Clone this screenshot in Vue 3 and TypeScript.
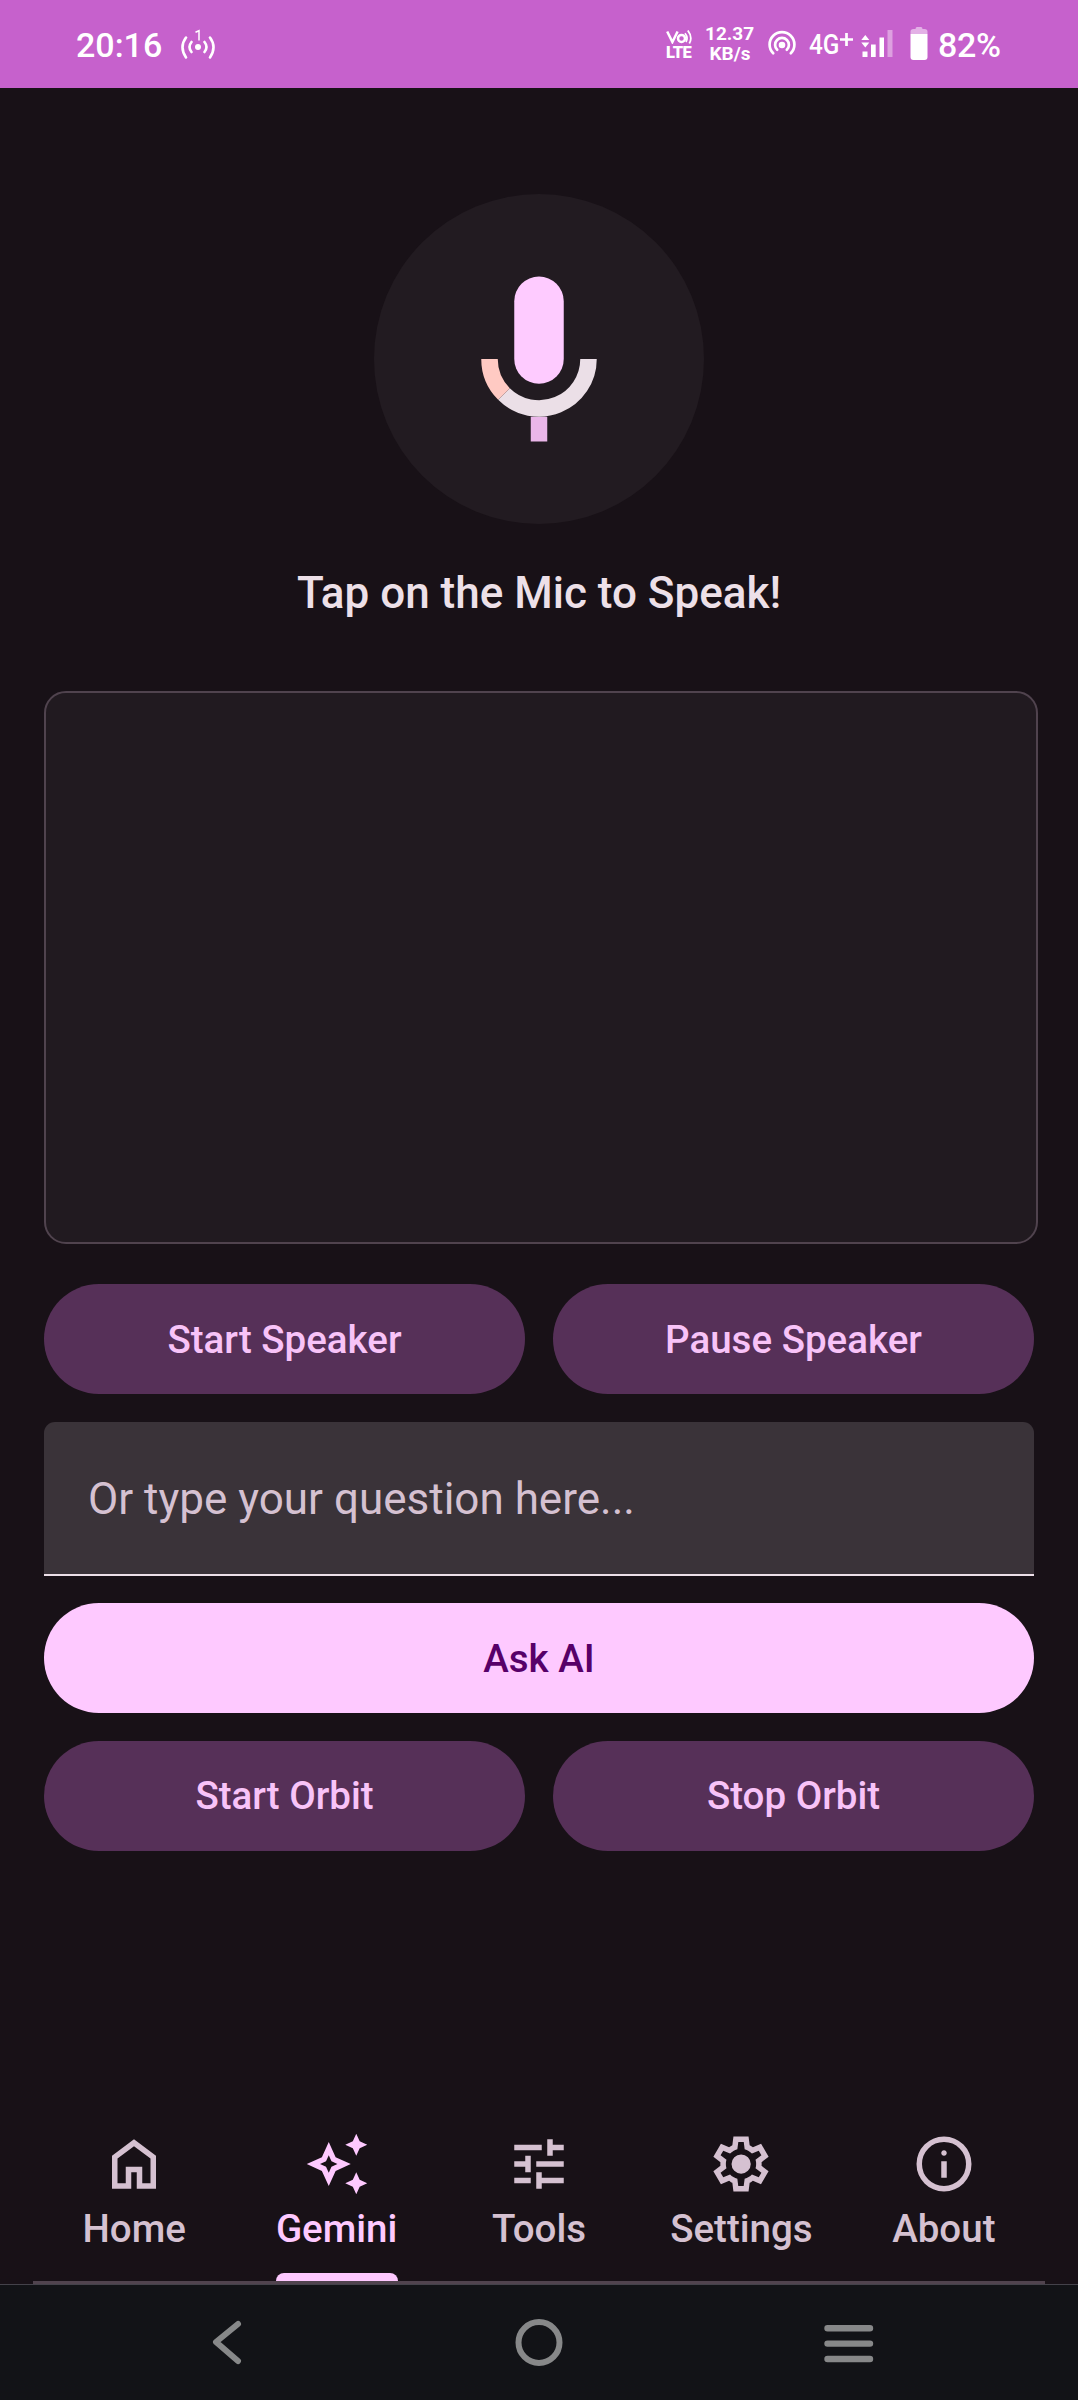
<script setup lang="ts">
import { ref } from 'vue'

interface Tab {
  label: string
  viewBox: string
  path: string
}

const tabs: Tab[] = [
  {
    label: 'Home',
    viewBox: '0 -960 960 960',
    path: 'M240-200h120v-240h240v240h120v-360L480-740 240-560v360Zm-80 80v-480l320-240 320 240v480H520v-240h-80v240H160Z',
  },
  {
    label: 'Gemini',
    viewBox: '0 0 24 24',
    path: 'M19 9l1.25-2.75L23 5l-2.75-1.25L19 1l-1.25 2.75L15 5l2.75 1.25L19 9zm0 6l-1.25 2.75L15 19l2.75 1.25L19 23l1.25-2.75L23 19l-2.75-1.25L19 15zM11.5 9.5L9 4 6.5 9.5 1 12l5.5 2.5L9 20l2.5-5.5L17 12l-5.5-2.5zm-1.51 3.49L9 15.17l-.99-2.18L5.83 12l2.18-.99L9 8.83l.99 2.18 2.17.99-2.17.99z',
  },
  {
    label: 'Tools',
    viewBox: '0 0 24 24',
    path: 'M3 17v2h6v-2H3zM3 5v2h10V5H3zm10 16v-2h8v-2h-8v-2h-2v6h2zM7 9v2H3v2h4v2h2V9H7zm14 4v-2H11v2h10zm-6-4h2V7h4V5h-4V3h-2v6z',
  },
  {
    label: 'Settings',
    viewBox: '0 -960 960 960',
    path: 'm370-80-16-128q-13-5-24.5-12T307-235l-119 50L78-375l103-78q-1-7-1-13.5v-27q0-6.5 1-13.5L78-585l110-190 119 50q11-8 23-15t24-12l16-128h220l16 128q13 5 24.5 12t22.5 15l119-50 110 190-103 78q1 7 1 13.5v27q0 6.5-2 13.5l103 78-110 190-118-50q-11 8-23 15t-24 12L590-80H370Zm70-80h79l14-106q31-8 57.5-23.5T639-327l99 41 39-68-86-65q5-14 7-29.5t2-31.5q0-16-2-31.5t-7-29.5l86-65-39-68-99 42q-22-23-48.5-38.5T533-694l-13-106h-79l-14 106q-31 8-57.5 23.5T321-633l-99-41-39 68 86 64q-5 15-7 30t-2 32q0 16 2 31t7 30l-86 65 39 68 99-42q22 23 48.5 38.5T427-266l13 106Zm42-180q58 0 99-41t41-99q0-58-41-99t-99-41q-59 0-99.5 41T342-480q0 58 40.5 99t99.5 41Z',
  },
  {
    label: 'About',
    viewBox: '0 -960 960 960',
    path: 'M440-280h80v-240h-80v240Zm40-320q17 0 28.5-11.5T520-640q0-17-11.5-28.5T480-680q-17 0-28.5 11.5T440-640q0 17 11.5 28.5T480-600Zm0 520q-83 0-156-31.5T197-197q-54-54-85.5-127T80-480q0-83 31.5-156T197-763q54-54 127-85.5T480-880q83 0 156 31.5T763-763q54 54 85.5 127T880-480q0 83-31.5 156T763-197q-54 54-127 85.5T480-80Zm0-80q134 0 227-93t93-227q0-134-93-227t-227-93q-134 0-227 93t-93 227q0 134 93 227t227 93Z',
  },
]

const active = ref('Gemini')
const question = ref('')
</script>

<template>
  <div class="screen">
    <header class="status">
      <span class="clock">20:16</span>
      <svg class="cast" width="36" height="34" viewBox="0 0 36 34" fill="none" stroke="#fff" stroke-width="2.6" stroke-linecap="round">
        <circle cx="18" cy="19" r="3" fill="#fff" stroke="none" />
        <path d="M11.500 14Q7.500 19 11.500 24M6 9.500Q-1 19 6 29.500M24.500 14Q28.500 19 24.500 24M30 9.500Q37 19 30 29.500" />
        <path d="M15.500 4.200L19 2.700V12.500" stroke-width="1.500" stroke-linecap="butt" />
      </svg>
      <div class="volte">
        <svg width="28" height="14" viewBox="0 0 28 14" fill="none" stroke="#fff" stroke-width="2.500">
          <path d="M1.200 1.500L6.400 12L11.600 1.500" />
          <circle cx="15.500" cy="8.400" r="3.500" />
          <path d="M19 3.200Q22.500 7.500 20 12M21.800 .500Q27 7.200 23.300 13.500" stroke-width="1.800" />
        </svg>
        <span>LTE</span>
      </div>
      <div class="speed"><span>12.37</span><span class="unit">KB/s</span></div>
      <svg class="hotspot" width="30" height="28" viewBox="0 0 30 28" fill="none" stroke="#fff" stroke-width="2.700" stroke-linecap="round">
        <circle cx="15" cy="15" r="3.300" fill="#fff" stroke="none" />
        <path d="M10.200 19.800A6.900 6.900 0 1 1 19.800 19.800M6.200 23.300A12.400 12.400 0 1 1 23.800 23.300" />
      </svg>
      <div class="net"><span>4G</span><svg width="13" height="14" viewBox="0 0 13 14"><path d="M6.500 0V13M0 6.500H13" stroke="#fff" stroke-width="2.700" /></svg></div>
      <svg class="signal" width="32" height="28" viewBox="0 0 32 28" fill="#fff">
        <path d="M4.300 5L8.300 10H.3ZM4.300 17.500L8.300 12.500H.3ZM1.500 21.500H6.500V27H1.500ZM10 14.500H14.700V27H10ZM18.500 7.500H23V27H18.500Z" />
        <path d="M26.500 0H31.500V27H26.500Z" fill-opacity=".4" />
      </svg>
      <svg class="battery" width="18" height="33" viewBox="0 0 18 33" fill="#fff">
        <path d="M.5 7V4.500Q.5 2 3.500 2H5.500Q5.500 0 7 0H11Q12.500 0 12.500 2H14.500Q17.500 2 17.500 4.500V7Z" fill-opacity=".5" />
        <path d="M.5 7H17.500V30Q17.500 33 14.500 33H3.500Q.5 33 .5 30Z" />
      </svg>
      <span class="percent">82%</span>
    </header>

    <main class="content">
      <button class="mic" aria-label="Microphone">
        <svg width="198" height="198" viewBox="0 0 24 24">
          <rect x="9" y="2" width="6" height="13" rx="3" fill="#fecbff" />
          <path d="M11 19H13V22H11Z" fill="#eab6e9" />
          <path d="M17 12H19A7 7 0 0 1 7.050 16.950L8.464 15.536A5 5 0 0 0 17 12Z" fill="#ebdfe7" />
          <path d="M5 12H7A5 5 0 0 0 8.464 15.536L7.050 16.950A7 7 0 0 1 5 12Z" fill="#ffcac3" />
        </svg>
      </button>
      <h1 class="title">Tap on the Mic to Speak!</h1>
      <section class="answer"></section>
      <div class="row">
        <button class="btn tonal">Start Speaker</button>
        <button class="btn tonal">Pause Speaker</button>
      </div>
      <input v-model="question" class="field" type="text" placeholder="Or type your question here..." />
      <button class="btn filled">Ask AI</button>
      <div class="row">
        <button class="btn tonal">Start Orbit</button>
        <button class="btn tonal">Stop Orbit</button>
      </div>
    </main>

    <nav class="tabs">
      <button
        v-for="tab in tabs"
        :key="tab.label"
        class="tab"
        :class="{ active: tab.label === active }"
        @click="active = tab.label"
      >
        <svg width="66" height="66" :viewBox="tab.viewBox" fill="currentColor"><path :d="tab.path" /></svg>
        <span class="label">{{ tab.label }}</span>
        <i class="indicator"></i>
      </button>
    </nav>

    <footer class="system">
      <svg width="60" height="60" viewBox="0 0 60 60"><path d="M41 12L19 30L41 49" stroke-width="6" stroke-linecap="round" stroke-linejoin="round" /></svg>
      <svg width="60" height="60" viewBox="0 0 60 60"><circle cx="30" cy="30.500" r="20.500" stroke-width="6" /></svg>
      <svg width="60" height="60" viewBox="0 0 60 60"><path d="M8.500 16.300H51M8.500 31.600H51M8.500 47H51" stroke-width="6.400" stroke-linecap="round" /></svg>
    </footer>
  </div>
</template>

<style>
body {
  background: #181117;
}
</style>

<style scoped>
.screen {
  display: flex;
  flex-direction: column;
  box-sizing: border-box;
  width: 1078px;
  height: 2400px;
  overflow: hidden;
  background: #181117;
  font-family: Roboto, "Liberation Sans", sans-serif;
}
button {
  margin: 0;
  padding: 0;
  border: 0;
  background: none;
  font: inherit;
}
svg {
  display: block;
  flex: none;
}
.status {
  display: flex;
  align-items: flex-start;
  box-sizing: border-box;
  height: 88px;
  padding-left: 76px;
  background: #c661cc;
  color: #fff;
  font-weight: 500;
  white-space: nowrap;
}
.status > * {
  flex: none;
}
.clock,
.percent {
  margin-top: 25px;
  font-size: 34px;
  line-height: 40px;
}
.clock {
  width: 104px;
}
.cast {
  margin-top: 28px;
}
.volte {
  width: 28px;
  margin: 30px 0 0 450px;
}
.volte span {
  display: block;
  font-size: 16.5px;
  font-weight: 900;
  line-height: 18px;
  letter-spacing: -0.6px;
}
.speed {
  display: flex;
  flex-direction: column;
  width: 48px;
  margin: 24px 0 0 11px;
  font-size: 19px;
  font-weight: 700;
  line-height: 20px;
}
.unit {
  align-self: center;
  margin-left: 2px;
}
.hotspot {
  margin: 30px 0 0 14px;
}
.net {
  display: flex;
  width: 44px;
  margin: 28px 0 0 12px;
  font-size: 28px;
  line-height: 33px;
}
.net span {
  width: 31px;
  transform: scaleX(0.87);
  transform-origin: left;
}
.net svg {
  margin-top: 5px;
}
.signal {
  margin: 30px 0 0 8px;
}
.battery {
  margin: 27px 0 0 17px;
}
.percent {
  margin-left: 10px;
  letter-spacing: -0.3px;
}
.content {
  display: flex;
  flex: 1;
  flex-direction: column;
  padding: 105.500px 44px 0;
}
.mic {
  display: flex;
  align-items: center;
  justify-content: center;
  align-self: center;
  width: 330px;
  height: 330px;
  border-radius: 50%;
  background: #221b21;
}
.title {
  height: 52px;
  margin: 43px 0 72px;
  color: #ede0e8;
  font-size: 44px;
  font-weight: 500;
  line-height: 52px;
  text-align: center;
  white-space: nowrap;
}
.answer {
  flex: none;
  box-sizing: border-box;
  width: 994px;
  height: 553px;
  border: 2px solid #50434e;
  border-radius: 22px;
  background: #211a20;
}
.row {
  display: flex;
  gap: 28px;
}
.answer + .row {
  margin-top: 40.750px;
}
.btn {
  flex: 1;
  height: 110px;
  border-radius: 55px;
  font-size: 38.500px;
  font-weight: 500;
}
.tonal {
  background: #563058;
  color: #f8c3f8;
}
.filled {
  flex: none;
  margin-bottom: 27.500px;
  background: #fec9ff;
  color: #570068;
}
.field {
  box-sizing: border-box;
  height: 154px;
  margin: 27.750px 0 27px;
  padding: 2px 44px 0;
  border: 0;
  border-bottom: 2px solid #ecdfe8;
  border-radius: 11px 11px 0 0;
  outline: 0;
  background: #3a3339;
  color: #ede0e8;
  font: 400 44px/52px Roboto, "Liberation Sans", sans-serif;
}
.field::placeholder {
  color: #d5c1d1;
  opacity: 1;
}
.tabs {
  display: flex;
  box-sizing: border-box;
  height: 153.500px;
  margin: 0 33px;
  border-bottom: 3px solid #50434e;
}
.tab {
  display: flex;
  flex: 1;
  flex-direction: column;
  align-items: center;
  color: #d5c1d1;
}
.label {
  margin-top: 9.250px;
  font-size: 38.500px;
  font-weight: 500;
  line-height: 46px;
}
.indicator {
  width: 122px;
  height: 8px;
  margin-top: auto;
  border-radius: 8px 8px 0 0;
}
.active {
  color: #fec9ff;
}
.active .indicator {
  background: #fec9ff;
}
.system {
  display: flex;
  align-items: flex-start;
  box-sizing: border-box;
  height: 116px;
  padding: 27px 0 0 197px;
  border-top: 1px solid #44424a;
  background: #121317;
}
.system svg {
  fill: none;
  stroke: #878889;
}
.system svg + svg {
  margin-left: 252px;
}
.system svg:last-child {
  margin-left: 250px;
}
</style>
